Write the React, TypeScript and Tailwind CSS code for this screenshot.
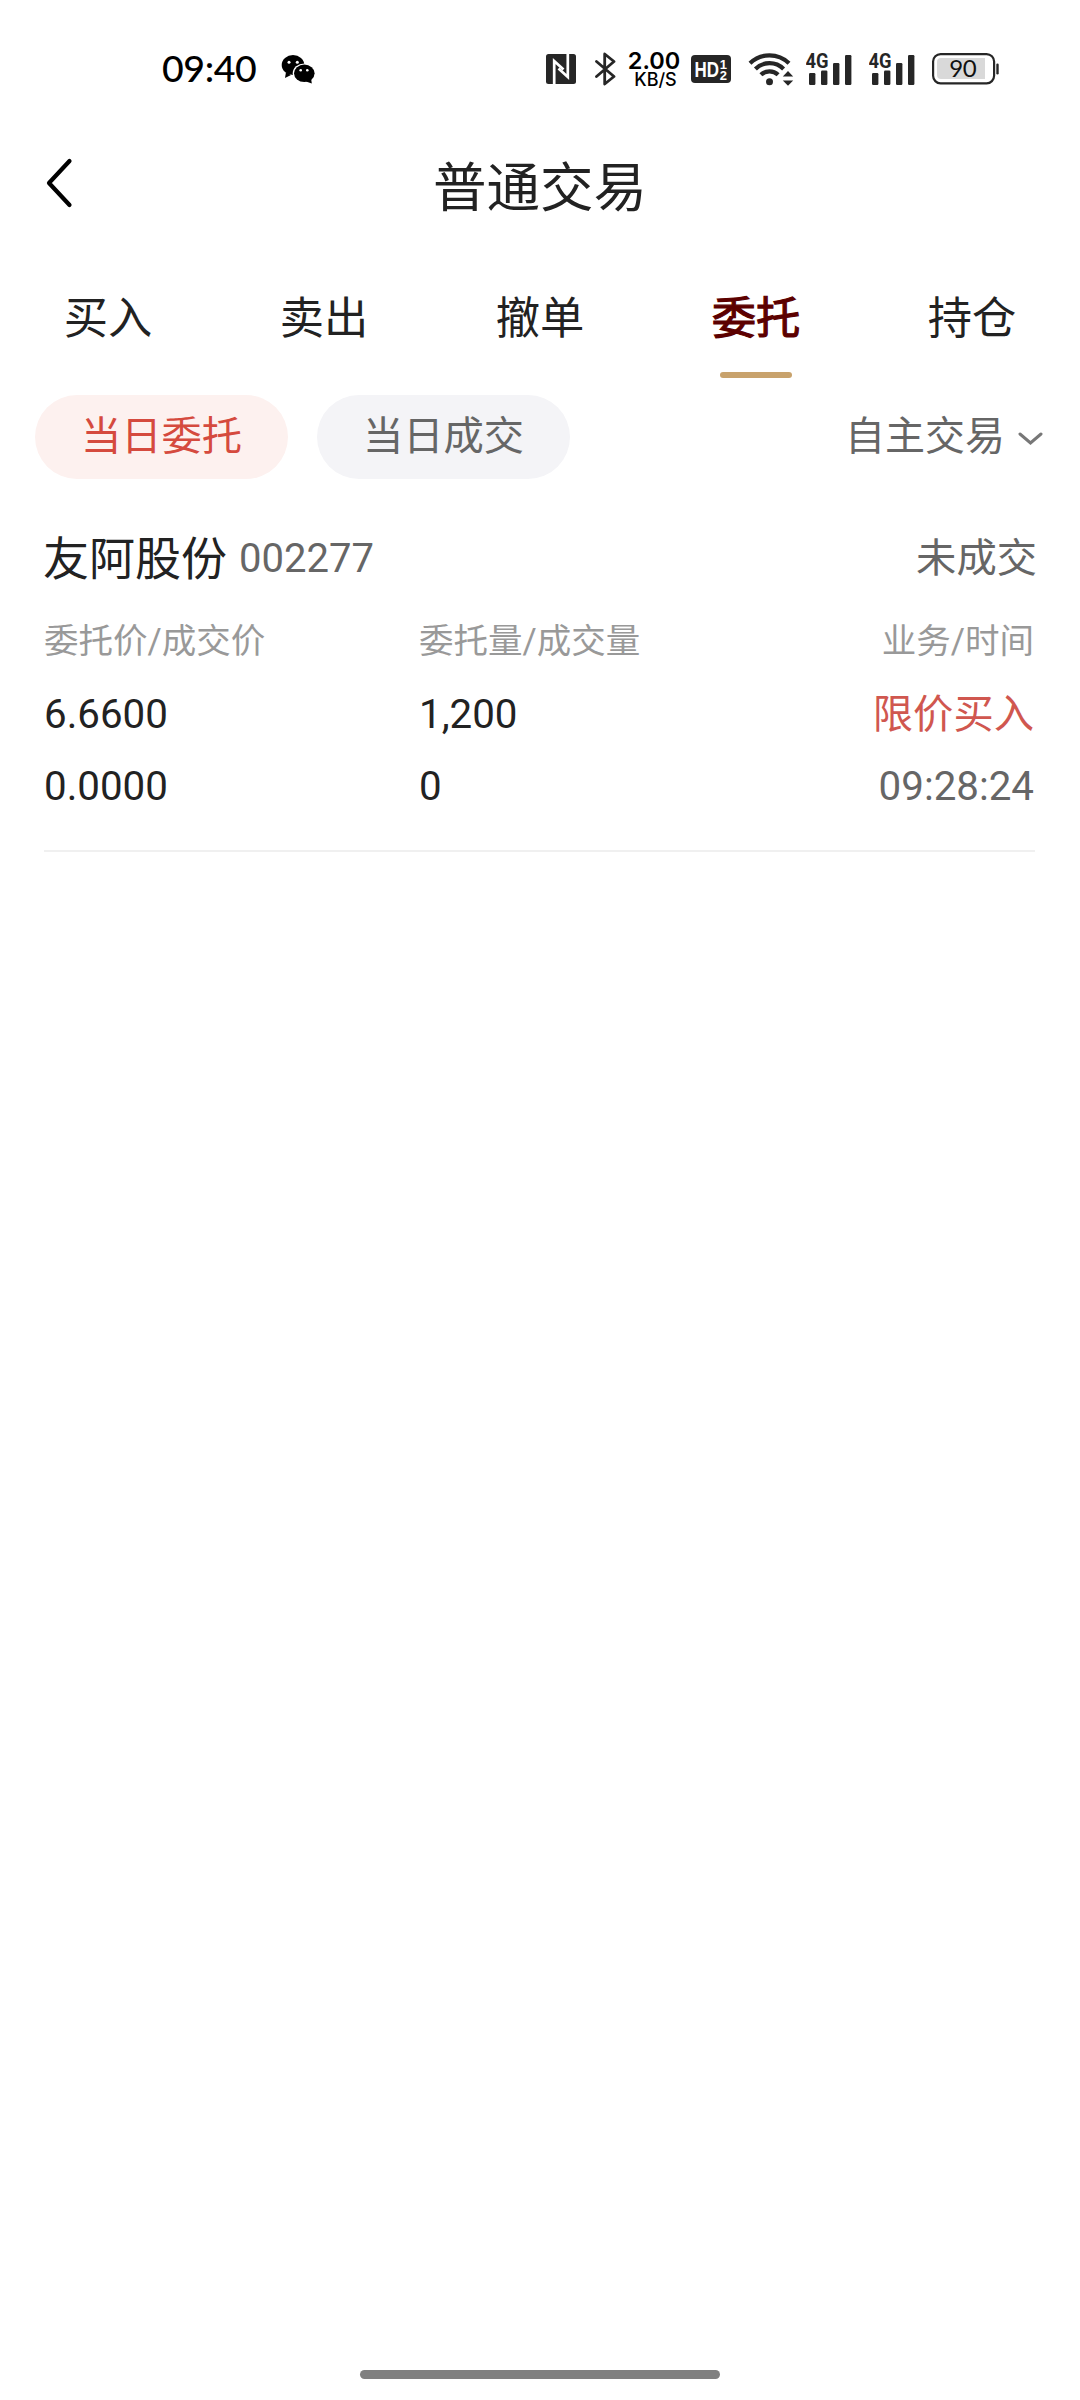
import { useState } from 'react';

interface Order {
  name: string;
  code: string;
  status: string;
  price: string;
  dealPrice: string;
  amount: string;
  dealAmount: string;
  type: string;
  time: string;
}

const TABS = ['买入', '卖出', '撤单', '委托', '持仓'];
const FILTERS = ['当日委托', '当日成交'];

const ORDERS: Order[] = [
  {
    name: '友阿股份',
    code: '002277',
    status: '未成交',
    price: '6.6600',
    dealPrice: '0.0000',
    amount: '1,200',
    dealAmount: '0',
    type: '限价买入',
    time: '09:28:24',
  },
];

const WechatIcon = () => (
  <svg width="36" height="32" viewBox="0 0 36 32" className="shrink-0">
    <path d="M6 19 5 25l6-3z" />
    <ellipse cx="13" cy="12" rx="11.3" ry="10" />
    <ellipse cx="24.3" cy="20.3" rx="11.6" ry="9.8" fill="#fff" />
    <ellipse cx="24.3" cy="20.3" rx="10.3" ry="8.7" />
    <path d="M26 28.5 31.8 30.6 31 25z" />
    <g fill="#fff">
      <circle cx="9" cy="9.3" r="1.5" />
      <circle cx="17.3" cy="9.3" r="1.5" />
      <circle cx="20.7" cy="17.3" r="1.3" />
      <circle cx="27.3" cy="17.3" r="1.3" />
    </g>
  </svg>
);

const NfcIcon = () => (
  <svg width="30" height="30" viewBox="0 0 30 30" className="shrink-0">
    <rect width="30" height="30" rx="2.5" fill="#262626" />
    <g fill="none" stroke="#fff" strokeWidth="2.7">
      <path d="M8.2 30V7l9.3 8.6" />
      <path d="M21.8 0v23l-9.3-8.6" />
    </g>
  </svg>
);

const BluetoothIcon = () => (
  <svg width="21" height="34" viewBox="0 0 21 34" className="shrink-0">
    <path
      d="M1.5 9.5 19 24.5 9.7 32V2L19 9.5 1.5 24.5"
      fill="none"
      stroke="#262626"
      strokeWidth="2.8"
      strokeLinejoin="round"
      strokeLinecap="round"
    />
  </svg>
);

const HdIcon = () => (
  <svg width="40" height="28" viewBox="0 0 40 28" className="shrink-0">
    <rect width="40" height="28" rx="4" fill="#262626" />
    <g fill="#fff" fontFamily="'Liberation Sans', sans-serif" fontWeight="700">
      <text x="3.6" y="21.8" fontSize="22" textLength="24.5" lengthAdjust="spacingAndGlyphs">HD</text>
      <text x="28.8" y="13.6" fontSize="13">1</text>
      <text x="28.8" y="24.6" fontSize="13">2</text>
    </g>
  </svg>
);

const WifiIcon = () => (
  <svg width="46" height="36" viewBox="0 0 46 36" className="shrink-0">
    <g fill="none" stroke="#262626" strokeWidth="4.2">
      <path d="M2 12.2a28 28 0 0 1 39 0" />
      <path d="M7.4 18a20 20 0 0 1 28.2 0" />
      <path d="M12.9 23.8a12.3 12.3 0 0 1 17.2 0" />
    </g>
    <circle cx="21.5" cy="30.8" r="3.5" fill="#262626" />
    <path d="m40 20 5.2 5.6H34.8zM40 34.8l5.2-5.4H34.8z" fill="#262626" />
  </svg>
);

const SignalIcon = () => (
  <svg width="46" height="44" viewBox="0 -5 46 44" className="shrink-0">
    <text
      x="-0.5"
      y="16.2"
      fontSize="20.5"
      fontWeight="700"
      fontFamily="Roboto, sans-serif"
      textLength="23"
      lengthAdjust="spacingAndGlyphs"
      fill="#262626"
    >
      4G
    </text>
    <g fill="#262626">
      <rect x="3" y="21" width="6.4" height="12" rx="1.2" />
      <rect x="15" y="18.5" width="6.4" height="14.5" rx="1.2" />
      <rect x="27" y="11" width="6.4" height="22" rx="1.2" />
      <rect x="39" y="3" width="6.4" height="30" rx="1.2" />
    </g>
  </svg>
);

const BatteryIcon = () => (
  <svg width="68" height="32" viewBox="0 0 68 32" className="shrink-0">
    <rect x="1.1" y="1.1" width="61" height="29.2" rx="7.5" fill="#fff" stroke="#262626" strokeWidth="2.2" />
    <path d="M9 5h44v21H9a4 4 0 0 1-4-4V9a4 4 0 0 1 4-4z" fill="#d9d9d9" />
    <rect x="64.3" y="10.5" width="2.4" height="11" rx="1.2" fill="#262626" />
    <text x="17.2" y="24" fontSize="24" fontFamily="Lato, sans-serif" textLength="27.4" fill="#111">90</text>
  </svg>
);

const StatusBar = () => (
  <div className="flex h-[137px] items-center pl-[162px] font-[Lato,sans-serif] text-black">
    <span className="w-[118px] pb-[2px] text-[37.5px] leading-none font-medium tracking-[-0.4px]">09:40</span>
    <WechatIcon />
    <div className="ml-[230px] flex items-center">
      <NfcIcon />
      <span className="w-[19px]" />
      <BluetoothIcon />
      <div className="ml-[11px] flex w-[54px] flex-col items-center pt-[2px] font-[Inter,sans-serif]">
        <span className="text-[23.5px] leading-[21px] font-semibold">2.00</span>
        <span className="pl-[3px] text-[18px] leading-[18px] font-medium">KB/S</span>
      </div>
      <span className="w-[10px]" />
      <HdIcon />
      <span className="w-[17px]" />
      <WifiIcon />
      <span className="w-[12px]" />
      <SignalIcon />
      <span className="w-[17px]" />
      <SignalIcon />
      <span className="w-[17px]" />
      <BatteryIcon />
    </div>
  </div>
);

const OrderItem = ({ order }: { order: Order }) => (
  <div className="mr-[45px] ml-[44px] border-b-2 border-[#f0f0f0] pb-[27px]">
    <div className="flex h-[84px] items-center justify-between">
      <div className="flex items-center">
        <span className="-ml-[1px] pt-[2px] text-[46px] text-[#222]">{order.name}</span>
        <span className="ml-[12px] pt-[1px] text-[40px] text-[#666]">{order.code}</span>
      </div>
      <span className="-mr-[2px] pt-[3px] text-[40.3px] text-[#666]">{order.status}</span>
    </div>
    <div className="grid grid-cols-[375px_1fr_auto] pt-[4px] text-[34.5px] leading-[75px] text-[#999]">
      <span>委托价/成交价</span>
      <span>委托量/成交量</span>
      <span className="mr-[1px] text-right">业务/时间</span>
    </div>
    <div className="grid grid-cols-[375px_1fr_auto] text-[40.3px] leading-[72px] text-[#222]">
      <span>{order.price}</span>
      <span>{order.amount}</span>
      <span className="mr-[1px] text-right text-[#d0574f]">{order.type}</span>
      <span>{order.dealPrice}</span>
      <span>{order.dealAmount}</span>
      <span className="mr-[1px] text-right text-[#666]">{order.time}</span>
    </div>
  </div>
);

const App = () => {
  const [tab, setTab] = useState<string>('委托');
  const [filter, setFilter] = useState<string>('当日委托');

  return (
    <div className="flex h-[2400px] w-[1080px] flex-col bg-white font-[Roboto,'Noto_Sans_CJK_SC',sans-serif] leading-none">
      <StatusBar />

      <header className="grid h-[99px] grid-cols-3 items-center">
        <button className="ml-[46px] -mt-[7px] w-7">
          <svg width="28" height="50" viewBox="0 0 28 50" fill="none" stroke="#000" strokeWidth="4.2" strokeLinecap="round" strokeLinejoin="round">
            <path d="M23.5 3 3 25l20.5 22" />
          </svg>
        </button>
        <h1 className="pt-[5px] text-center text-[53.5px] whitespace-nowrap text-[#222]">普通交易</h1>
      </header>

      <nav className="grid h-[142px] grid-cols-5">
        {TABS.map((item) => (
          <button key={item} onClick={() => setTab(item)} className="flex flex-col items-center justify-between">
            <span
              className={
                item === tab
                  ? 'pt-[61px] text-[44.3px] leading-[44px] text-[#5c0000] [-webkit-text-stroke:1.1px_#5c0000]'
                  : 'pt-[61px] text-[44.3px] leading-[44px] text-[#222]'
              }
            >
              {item}
            </span>
            {item === tab && <span className="h-1.5 w-[72px] rounded-full bg-[#c8a26c]" />}
          </button>
        ))}
      </nav>

      <div className="mt-[17px] flex items-center pr-[37px] pl-[35px]">
        <div className="flex gap-[29px]">
          {FILTERS.map((item) => (
            <button
              key={item}
              onClick={() => setFilter(item)}
              className={
                item === filter
                  ? 'h-[84px] w-[253px] rounded-full bg-[#fdf1ef] pt-[1px] text-[40.3px] text-[#d54a3e]'
                  : 'h-[84px] w-[253px] rounded-full bg-[#f4f4f7] pt-[1px] text-[40.3px] text-[#666]'
              }
            >
              {item}
            </button>
          ))}
        </div>
        <button className="ml-auto flex items-center gap-[13px] text-[40px] text-[#666]">
          自主交易
          <svg width="25" height="14" viewBox="0 0 25 14" className="mt-1" fill="none" stroke="#777" strokeWidth="3" strokeLinecap="round">
            <path d="m2 2 10.5 9L23 2" />
          </svg>
        </button>
      </div>

      <main className="mt-[37px] flex-1">
        {ORDERS.map((order) => (
          <OrderItem key={order.code} order={order} />
        ))}
      </main>

      <div className="mx-auto mb-[21px] h-[9px] w-[360px] rounded-full bg-[#808080]" />
    </div>
  );
};

export default App;
